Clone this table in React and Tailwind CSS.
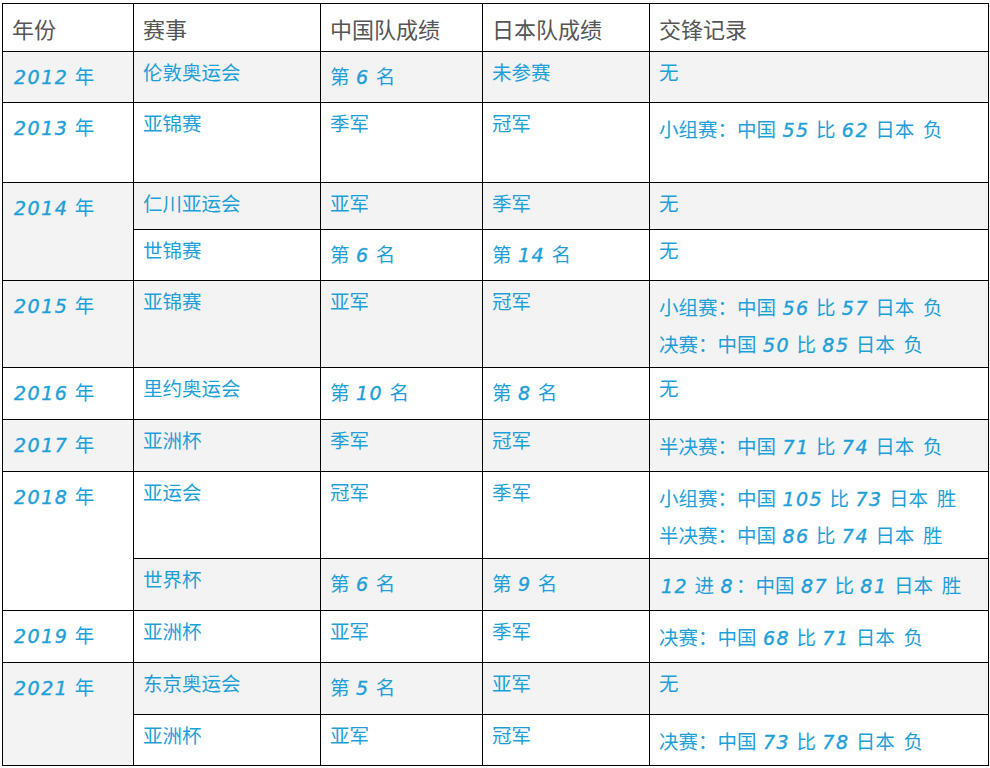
import React from "react";

function Num({ children }) {
  return (
    <span className="mx-[2px] font-['DejaVu_Sans',sans-serif] italic text-[19px] tracking-[1.5px] leading-[35px] [-webkit-text-stroke:0.4px_#1e9fd8]">
      {children}
    </span>
  );
}

function T({ s }) {
  const parts = s.split(/(\d+)/);
  return (
    <>
      {parts.map((p, i) =>
        /^\d+$/.test(p) ? <Num key={i}>{p}</Num> : <React.Fragment key={i}>{p}</React.Fragment>
      )}
    </>
  );
}

function Cell({ children, rowSpan, extra = "" }) {
  return (
    <td
      rowSpan={rowSpan}
      className={"border border-black align-top px-[9px] pt-[8px] pb-0 leading-[24px] text-[19.5px] text-[#1e9fd8] whitespace-pre " + extra}
    >
      {children}
    </td>
  );
}

function Lines({ items }) {
  return (
    <div className="flex flex-col">
      {items.map((s, i) => (
        <div key={i} className="leading-[35px] whitespace-pre">
          <T s={s} />
        </div>
      ))}
    </div>
  );
}

export default function App() {
  const gray = "bg-[#f3f3f3]";
  const white = "bg-white";
  return (
    <div className="w-[990px] h-[768px] bg-white pt-[3px] pl-[2px] overflow-hidden font-['Noto_Sans_CJK_SC','Noto_Sans',sans-serif]">
      <table className="table-fixed border-collapse w-[986px]">
        <colgroup>
          <col className="w-[131px]" />
          <col className="w-[187px]" />
          <col className="w-[162px]" />
          <col className="w-[167px]" />
          <col className="w-[339px]" />
        </colgroup>
        <thead>
          <tr className="h-[48px] bg-white">
            {["年份", "赛事", "中国队成绩", "日本队成绩", "交锋记录"].map((h) => (
              <th
                key={h}
                className="border border-black text-left align-middle px-[9px] text-[22px] font-normal text-[#555555] leading-[30px]"
              >
                {h}
              </th>
            ))}
          </tr>
        </thead>
        <tbody>
          <tr className={"h-[51px] " + gray}>
            <Cell><T s="2012 年" /></Cell>
            <Cell>伦敦奥运会</Cell>
            <Cell><T s="第 6 名" /></Cell>
            <Cell>未参赛</Cell>
            <Cell>无</Cell>
          </tr>
          <tr className={"h-[80px] " + white}>
            <Cell><T s="2013 年" /></Cell>
            <Cell>亚锦赛</Cell>
            <Cell>季军</Cell>
            <Cell>冠军</Cell>
            <Cell><Lines items={["小组赛：中国 55 比 62 日本  负"]} /></Cell>
          </tr>
          <tr className={"h-[47px] " + gray}>
            <Cell rowSpan={2}><T s="2014 年" /></Cell>
            <Cell>仁川亚运会</Cell>
            <Cell>亚军</Cell>
            <Cell>季军</Cell>
            <Cell>无</Cell>
          </tr>
          <tr className={"h-[51px] " + white}>
            <Cell>世锦赛</Cell>
            <Cell><T s="第 6 名" /></Cell>
            <Cell><T s="第 14 名" /></Cell>
            <Cell>无</Cell>
          </tr>
          <tr className={"h-[87px] " + gray}>
            <Cell><T s="2015 年" /></Cell>
            <Cell>亚锦赛</Cell>
            <Cell>亚军</Cell>
            <Cell>冠军</Cell>
            <Cell><Lines items={["小组赛：中国 56 比 57 日本  负", "决赛：中国 50 比 85 日本  负"]} /></Cell>
          </tr>
          <tr className={"h-[52px] " + white}>
            <Cell><T s="2016 年" /></Cell>
            <Cell>里约奥运会</Cell>
            <Cell><T s="第 10 名" /></Cell>
            <Cell><T s="第 8 名" /></Cell>
            <Cell>无</Cell>
          </tr>
          <tr className={"h-[52px] " + gray}>
            <Cell><T s="2017 年" /></Cell>
            <Cell>亚洲杯</Cell>
            <Cell>季军</Cell>
            <Cell>冠军</Cell>
            <Cell><Lines items={["半决赛：中国 71 比 74 日本  负"]} /></Cell>
          </tr>
          <tr className={"h-[87px] " + white}>
            <Cell rowSpan={2}><T s="2018 年" /></Cell>
            <Cell>亚运会</Cell>
            <Cell>冠军</Cell>
            <Cell>季军</Cell>
            <Cell><Lines items={["小组赛：中国 105 比 73 日本  胜", "半决赛：中国 86 比 74 日本  胜"]} /></Cell>
          </tr>
          <tr className={"h-[52px] " + gray}>
            <Cell>世界杯</Cell>
            <Cell><T s="第 6 名" /></Cell>
            <Cell><T s="第 9 名" /></Cell>
            <Cell><Lines items={["12 进 8：中国 87 比 81 日本  胜"]} /></Cell>
          </tr>
          <tr className={"h-[52px] " + white}>
            <Cell><T s="2019 年" /></Cell>
            <Cell>亚洲杯</Cell>
            <Cell>亚军</Cell>
            <Cell>季军</Cell>
            <Cell><Lines items={["决赛：中国 68 比 71 日本  负"]} /></Cell>
          </tr>
          <tr className={"h-[52px] " + gray}>
            <Cell rowSpan={2}><T s="2021 年" /></Cell>
            <Cell>东京奥运会</Cell>
            <Cell><T s="第 5 名" /></Cell>
            <Cell>亚军</Cell>
            <Cell>无</Cell>
          </tr>
          <tr className={"h-[51px] " + white}>
            <Cell>亚洲杯</Cell>
            <Cell>亚军</Cell>
            <Cell>冠军</Cell>
            <Cell><Lines items={["决赛：中国 73 比 78 日本  负"]} /></Cell>
          </tr>
        </tbody>
      </table>
    </div>
  );
}
